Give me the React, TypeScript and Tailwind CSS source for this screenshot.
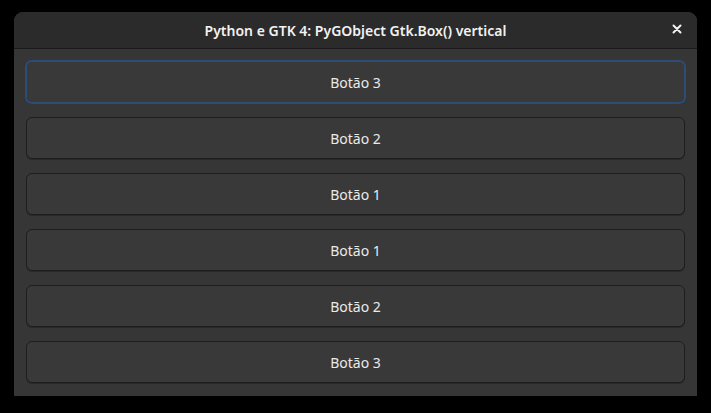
const labels = ["Botão 3", "Botão 2", "Botão 1", "Botão 1", "Botão 2", "Botão 3"]

const App = () => {
  return (
    <div className="w-[711px] h-[413px] bg-black pt-[12px] pl-[14px] font-['Noto_Sans',sans-serif]">
      <div className="w-[683px] h-[384px] flex flex-col rounded-t-[9px] overflow-hidden bg-[#363636]">
        <div className="h-[37px] shrink-0 relative flex items-center justify-center bg-[#2b2b2b] border-b border-[#1b1b1b]">
          <span className="text-[14px] font-semibold text-[#f2f2f2]">
            Python e GTK 4: PyGObject Gtk.Box() vertical
          </span>
          <span className="absolute right-[13px] top-[10px] text-[#f2f2f2]">
            <svg width="14" height="14" viewBox="0 0 14 14">
              <path d="M3.5 3.5 L10.5 10.5 M10.5 3.5 L3.5 10.5" stroke="currentColor" strokeWidth="2" strokeLinecap="round" />
            </svg>
          </span>
        </div>
        <div className="flex flex-col gap-[14px] px-[12px] pt-[12px]">
          {labels.map((label, i) => (
            <button
              key={i}
              className={
                i === 0
                  ? "h-[42px] rounded-[6px] bg-[#393939] border border-[#1e1e1e] text-[14px] text-[#eaeaea] outline-2 outline-[#2b4d78] outline-offset-[-1px] shadow-[0_1px_0_rgba(0,0,0,0.25)]"
                  : "h-[42px] rounded-[6px] bg-[#393939] border border-[#1e1e1e] text-[14px] text-[#eaeaea] shadow-[0_1px_0_rgba(0,0,0,0.25)]"
              }
            >
              {label}
            </button>
          ))}
        </div>
      </div>
    </div>
  )
}

export default App
